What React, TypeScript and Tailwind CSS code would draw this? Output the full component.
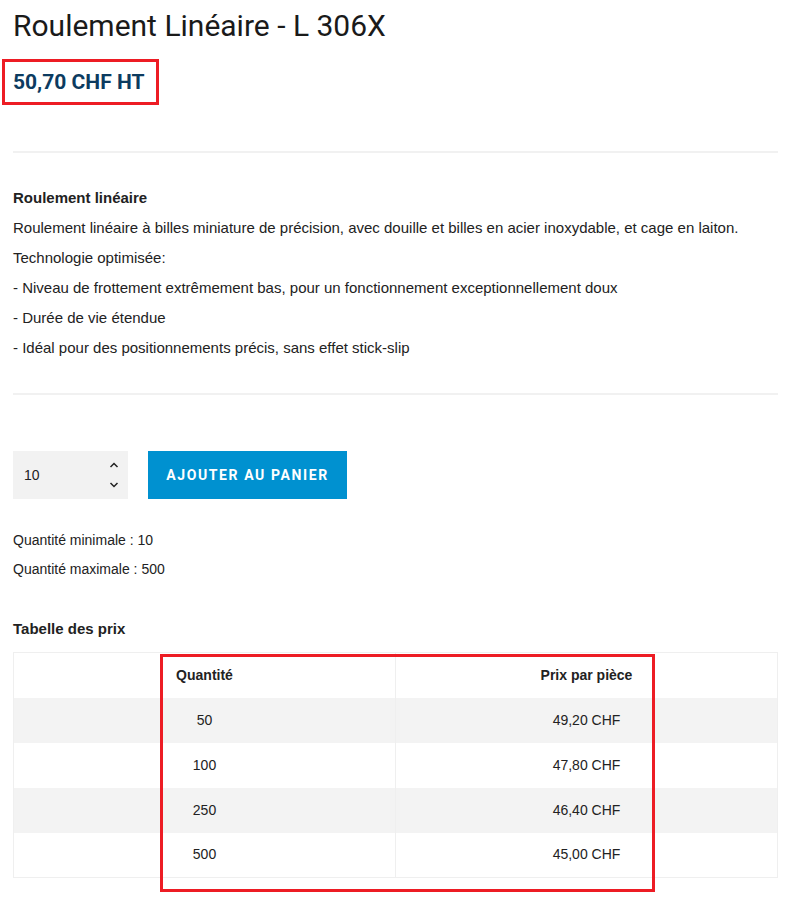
const tiers = [
    { qty: "50", price: "49,20 CHF" },
    { qty: "100", price: "47,80 CHF" },
    { qty: "250", price: "46,40 CHF" },
    { qty: "500", price: "45,00 CHF" },
]

const descLines = [
    "Roulement linéaire à billes miniature de précision, avec douille et billes en acier inoxydable, et cage en laiton.",
    "Technologie optimisée:",
    "- Niveau de frottement extrêmement bas, pour un fonctionnement exceptionnellement doux",
    "- Durée de vie étendue",
    "- Idéal pour des positionnements précis, sans effet stick-slip",
]

const App = () => {
    return (
        <div className="min-h-[900px] bg-white pl-[13px] pr-[15px] pt-2 text-[#222] font-['Liberation_Sans',Arial,sans-serif]">

            {/* title + price */}
            <h1 className="font-['Roboto',sans-serif] text-[30px] leading-[36px] text-[#1a1a1a]">
                Roulement Linéaire - L 306X
            </h1>

            <div className="mt-[26px]">
                <span className="relative inline-block font-['Roboto',sans-serif] font-bold text-[21px] leading-[24px] text-[#0c3b60]">
                    50,70 CHF HT
                    <span className="absolute left-[-11px] top-[-11px] w-[157px] h-[46px] border-[3px] border-[#ed1c24]" />
                </span>
            </div>

            <div className="mt-[55px] h-[2px] bg-[#f1f1f1]" />

            {/* description */}
            <div className="mt-[30px] text-[15px] leading-[30px]">
                <p className="font-bold">Roulement linéaire</p>
                {descLines.map((line, i) => (
                    <p key={i}>{line}</p>
                ))}
            </div>

            <div className="mt-[30px] h-[2px] bg-[#f1f1f1]" />

            {/* quantity + add to cart */}
            <div className="mt-[56px] flex gap-5">
                <div className="flex w-[115px] h-12 items-center justify-between bg-[#f2f2f2] pl-[11px] pr-[9px]">
                    <span className="text-[14px]">10</span>
                    <div className="flex flex-col gap-[14px]">
                        <svg width="10" height="6" viewBox="0 0 10 6" fill="none" stroke="#222" strokeWidth="1.5">
                            <path d="M1.5 5 L5 1.5 L8.5 5" />
                        </svg>
                        <svg width="10" height="6" viewBox="0 0 10 6" fill="none" stroke="#222" strokeWidth="1.5">
                            <path d="M1.5 1 L5 4.5 L8.5 1" />
                        </svg>
                    </div>
                </div>
                <button className="w-[199px] h-12 bg-[#0091d0] text-white font-['Roboto',sans-serif] font-bold text-[14px] tracking-[1.6px] uppercase">
                    Ajouter au panier
                </button>
            </div>

            <div className="mt-[27px] text-[14px] leading-[29px]">
                <p>Quantité minimale : 10</p>
                <p>Quantité maximale : 500</p>
            </div>

            {/* price table */}
            <p className="mt-[30px] font-bold text-[15px] leading-[30px]">Tabelle des prix</p>

            <div className="relative mt-2">
                <table className="w-full border-collapse border border-[#efefef] text-[14px]">
                    <thead>
                        <tr className="h-[45px]">
                            <th className="w-1/2 border-r border-[#efefef] text-center font-bold">Quantité</th>
                            <th className="text-center font-bold">Prix par pièce</th>
                        </tr>
                    </thead>
                    <tbody>
                        {tiers.map((t, i) => (
                            <tr key={t.qty} className={`h-[45px] ${i % 2 === 0 ? "bg-[#f3f3f3]" : "bg-white"}`}>
                                <td className="border-r border-[#efefef] text-center">{t.qty}</td>
                                <td className="text-center">{t.price}</td>
                            </tr>
                        ))}
                    </tbody>
                </table>
                <div className="absolute left-[147px] top-[2px] w-[495px] h-[238px] border-[3px] border-[#ed1c24]" />
            </div>
        </div>
    )
}

export default App
